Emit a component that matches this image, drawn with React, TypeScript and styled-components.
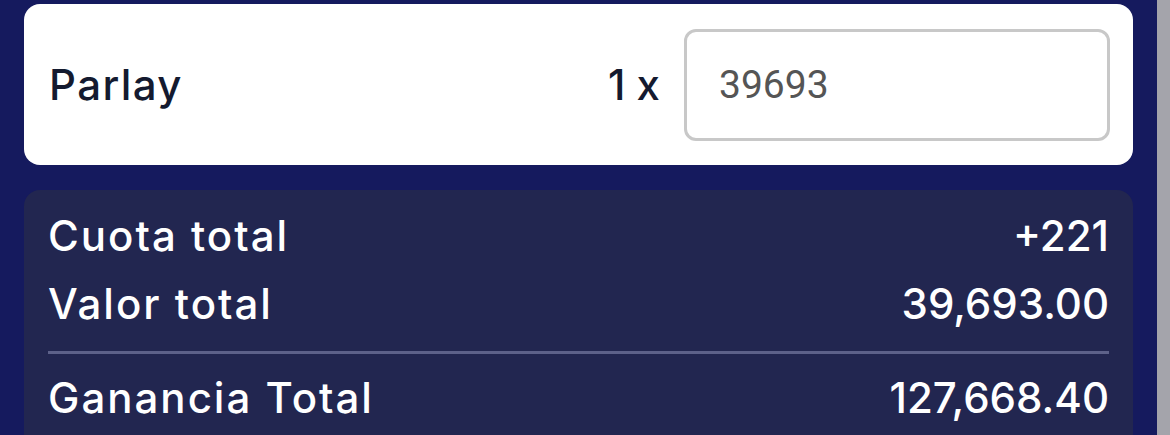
import React from 'react';
import styled, { createGlobalStyle } from 'styled-components';

const GlobalStyle = createGlobalStyle`
  html, body {
    margin: 0;
    padding: 0;
    background: #151a5e;
    overflow: hidden;
  }
`;

const Page = styled.div`
  display: flex;
  width: 1170px;
  height: 435px;
  background: #151a5e;
  font-family: Inter, "Noto Sans", sans-serif;
`;

const Main = styled.main`
  flex: 1;
  display: flex;
  flex-direction: column;
  gap: 25px;
  padding: 4px 24px 0 24px;
  min-width: 0;
`;

const ScrollStrip = styled.aside`
  width: 13px;
  background: #a4a4ab;
`;

const StakeCard = styled.section`
  display: flex;
  align-items: center;
  height: 161px;
  padding: 0 23px 0 25px;
  background: #ffffff;
  border-radius: 16px;
  box-sizing: border-box;
`;

const BetType = styled.span`
  flex: 1;
  font-size: 42px;
  font-weight: 500;
  letter-spacing: 1.4px;
  color: #141a2f;
`;

const Multiplier = styled.span`
  margin-right: 24px;
  font-size: 42px;
  font-weight: 500;
  color: #141a2f;
`;

const StakeInput = styled.input`
  width: 426px;
  height: 112px;
  box-sizing: border-box;
  padding: 0 32px;
  border: 3px solid #c8c8c8;
  border-radius: 12px;
  font-family: Roboto, "Liberation Sans", sans-serif;
  font-size: 39px;
  color: #555555;
  background: #ffffff;
  outline: none;
`;

const SummaryCard = styled.section`
  flex: 1;
  padding: 11px 24px 0 24px;
  background: #222650;
  border-radius: 16px 16px 0 0;
`;

const Row = styled.div<{ $top?: number }>`
  display: flex;
  justify-content: space-between;
  align-items: center;
  height: 68px;
  margin-top: ${(p) => p.$top ?? 0}px;
  font-size: 42px;
  font-weight: 500;
  color: #ffffff;
`;

const Label = styled.span`
  letter-spacing: 2px;
`;

const Value = styled.span`
  letter-spacing: 0;
`;

const Divider = styled.hr`
  margin: 14px 0 0 0;
  border: none;
  height: 3px;
  background: #5d6189;
`;

const rows = [
  { label: 'Cuota total', value: '+221' },
  { label: 'Valor total', value: '39,693.00' },
];

export default function App() {
  return (
    <>
      <GlobalStyle />
      <Page>
        <Main>
          <StakeCard>
            <BetType>Parlay</BetType>
            <Multiplier>1 x</Multiplier>
            <StakeInput defaultValue="39693" />
          </StakeCard>
          <SummaryCard>
            {rows.map((r) => (
              <Row key={r.label}>
                <Label>{r.label}</Label>
                <Value>{r.value}</Value>
              </Row>
            ))}
            <Divider />
            <Row $top={9}>
              <Label>Ganancia Total</Label>
              <Value>127,668.40</Value>
            </Row>
          </SummaryCard>
        </Main>
        <ScrollStrip />
      </Page>
    </>
  );
}
